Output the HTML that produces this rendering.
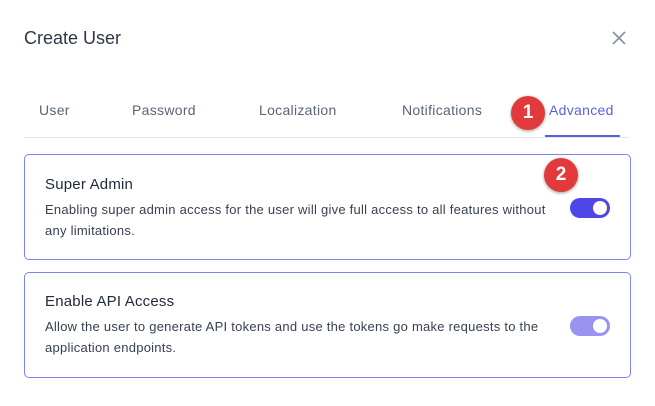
<!DOCTYPE html>
<html><head><style>
body{margin:0;width:655px;height:406px;background:#fff;font-family:"Liberation Sans",sans-serif;position:relative;overflow:hidden}
.a{position:absolute;white-space:nowrap}
.title{left:24px;top:28px;font-size:18px;color:#2d3748}
.tab{top:102px;font-size:14px;color:#5a6478;letter-spacing:0.3px}
.card{position:absolute;left:24px;width:607px;border:1px solid #7c83ee;border-radius:5px;box-sizing:border-box}
.h{font-size:15px;color:#1f2937;left:20px;letter-spacing:0.2px}
.d{font-size:13px;color:#374151;left:20px;line-height:21px;letter-spacing:0.25px}
.tog{position:absolute;width:40px;height:20px;border-radius:10px}
.tog i{position:absolute;right:3px;top:3px;width:14px;height:14px;border-radius:50%;background:#fff}
.badge{position:absolute;width:34px;height:34px;border-radius:50%;background:#e23a3a;color:#fff;font-weight:bold;font-size:19px;text-align:center;line-height:34px;box-shadow:0 1px 3px rgba(0,0,0,.4)}
</style></head><body>
<div class="a title">Create User</div>
<svg class="a" style="left:611px;top:30px" width="16" height="16" viewBox="0 0 16 16"><path d="M2 2L14 14M14 2L2 14" stroke="#8a93a3" stroke-width="1.8"/></svg>
<div class="a tab" style="left:39px">User</div>
<div class="a tab" style="left:132px">Password</div>
<div class="a tab" style="left:259px">Localization</div>
<div class="a tab" style="left:402px">Notifications</div>
<div class="a tab" style="left:549px;color:#5a5fe0">Advanced</div>
<div class="a" style="left:24px;top:137px;width:605px;height:1px;background:#e5e7eb"></div>
<div class="a" style="left:545px;top:135px;width:75px;height:2px;background:#5a5fe0"></div>
<div class="badge" style="left:511px;top:96px">1</div>
<div class="card" style="top:154px;height:106px">
<div class="a h" style="top:21px">Super Admin</div>
<div class="a d" style="top:44px">Enabling super admin access for the user will give full access to all features without<br>any limitations.</div>
<div class="tog" style="left:545px;top:43px;background:#4f46e5"><i></i></div>
</div>
<div class="badge" style="left:544px;top:158px">2</div>
<div class="card" style="top:272px;height:106px">
<div class="a h" style="top:20px">Enable API Access</div>
<div class="a d" style="top:43px">Allow the user to generate API tokens and use the tokens go make requests to the<br>application endpoints.</div>
<div class="tog" style="left:545px;top:43px;background:#9b93f0"><i></i></div>
</div>
</body></html>
